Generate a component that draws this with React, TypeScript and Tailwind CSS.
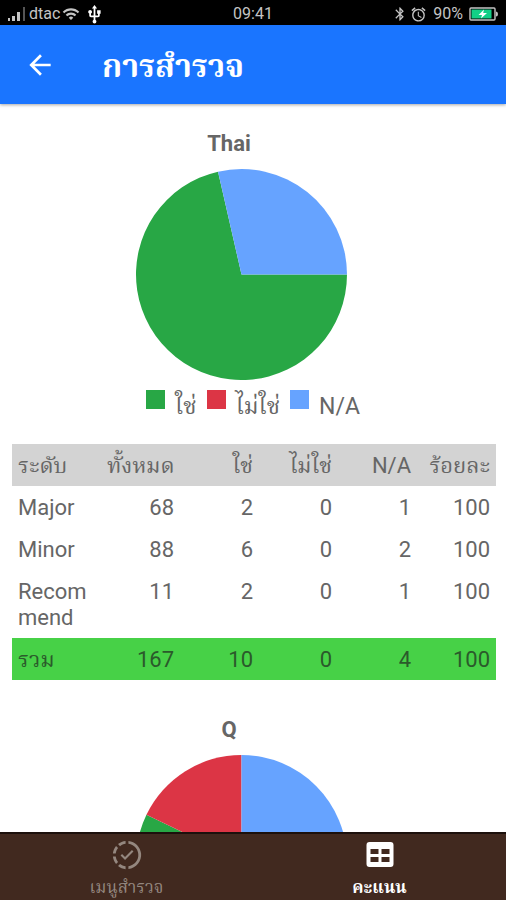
import { MdAccessAlarm, MdArrowBack, MdBluetooth, MdUsb, MdWifi } from "react-icons/md";

const GREEN = "#28a745";
const RED = "#dc3545";
const BLUE = "#66a3ff";

const columns = ["ระดับ", "ทั้งหมด", "ใช่", "ไม่ใช่", "N/A", "ร้อยละ"];

const rows = [
  ["Major", 68, 2, 0, 1, 100],
  ["Minor", 88, 6, 0, 2, 100],
  ["Recommend", 11, 2, 0, 1, 100],
];

const total = ["รวม", 167, 10, 0, 4, 100];

const legend = [
  { label: "ใช่", color: GREEN },
  { label: "ไม่ใช่", color: RED },
  { label: "N/A", color: BLUE },
];

type Slice = { value: number; color: string };

// slices run clockwise, starting at three o'clock
const PieChart = ({ slices }: { slices: Slice[] }) => {
  const sum = slices.reduce((acc, s) => acc + s.value, 0);
  let angle = 0;

  return (
    <svg viewBox="-100 -100 200 200" className="size-[211px]">
      {slices
        .filter((s) => s.value > 0)
        .map((s) => {
          const start = angle;
          const sweep = (s.value / sum) * Math.PI * 2;
          angle += sweep;
          const x1 = Math.cos(start) * 100;
          const y1 = Math.sin(start) * 100;
          const x2 = Math.cos(angle) * 100;
          const y2 = Math.sin(angle) * 100;
          return (
            <path
              key={s.color}
              fill={s.color}
              d={`M0 0L${x1} ${y1}A100 100 0 ${sweep > Math.PI ? 1 : 0} 1 ${x2} ${y2}Z`}
            />
          );
        })}
    </svg>
  );
};

const Chart = ({ title, slices }: { title: string; slices: Slice[] }) => {
  return (
    <>
      <h2 className="pr-[50px] text-center text-[22px] leading-[26px] font-bold text-[#666]">
        {title}
      </h2>
      <div className="mt-3 flex justify-center pr-[26px]">
        <PieChart slices={slices} />
      </div>
    </>
  );
};

const Legend = () => {
  return (
    <ul className="mt-[10px] flex justify-center gap-x-[10px] pr-[2px] text-[23px] leading-[26px]">
      {legend.map((item) => (
        <li key={item.label} className="flex items-start gap-x-[10px]">
          <span
            className="size-[19px]"
            style={{ backgroundColor: item.color }}
          />
          <span className="pt-1">{item.label}</span>
        </li>
      ))}
    </ul>
  );
};

const ScoreTable = () => {
  return (
    <table className="mt-6 w-full table-fixed text-right">
      <thead className="bg-[#d3d3d3]">
        <tr>
          {columns.map((col) => (
            <th
              key={col}
              scope="col"
              className="px-[6px] pt-[9px] pb-[7px] font-normal whitespace-nowrap first:w-[89px] first:text-left"
            >
              {col}
            </th>
          ))}
        </tr>
      </thead>
      <tbody>
        {rows.map((row) => (
          <tr key={row[0]}>
            {row.map((cell, i) => (
              <td
                key={i}
                className="px-[6px] pt-[9px] pb-[7px] align-top break-all first:text-left"
              >
                {cell}
              </td>
            ))}
          </tr>
        ))}
      </tbody>
      <tfoot className="bg-[#47d147] text-[#2b5a2b]">
        <tr>
          {total.map((cell, i) => (
            <td key={i} className="px-[6px] pt-[9px] pb-[7px] first:text-left">
              {cell}
            </td>
          ))}
        </tr>
      </tfoot>
    </table>
  );
};

const StatusBar = () => {
  return (
    <div className="grid h-[25px] shrink-0 grid-cols-[1fr_auto_1fr] items-center bg-black px-[7px] pt-[2px] text-base text-[#c4c4c4]">
      <div className="flex items-center gap-x-[2px]">
        <svg viewBox="0 0 20 14" className="h-[14px] w-5" fill="currentColor">
          <rect x="1" y="11" width="2" height="3" />
          <rect x="5" y="9" width="3" height="5" />
          <rect x="10" y="5" width="3" height="9" />
          <rect x="16" y="0" width="2" height="14" fill="#555" />
        </svg>
        <span>dtac</span>
        <MdWifi className="size-[18px]" />
        <MdUsb className="ml-[2px] size-[21px] text-white" />
      </div>
      <span>09:41</span>
      <div className="flex items-center justify-end gap-x-[2px]">
        <MdBluetooth className="size-4" />
        <MdAccessAlarm className="size-[17px]" />
        <span className="mx-1">90%</span>
        <svg viewBox="0 0 30 14" className="h-[14px] w-[30px]">
          <rect
            x="1"
            y="1"
            width="25"
            height="12"
            rx="1"
            fill="none"
            stroke="#c4c4c4"
            strokeWidth="1.4"
          />
          <rect x="2.5" y="2.5" width="20" height="9" fill="#12cf86" />
          <path d="M27 4.5q2 0 2 2.5t-2 2.5z" fill="#c4c4c4" />
          <path d="M15 2.5L9.500 8h3.500l-1 3.500L18 6h-3.800z" fill="#fff" />
        </svg>
      </div>
    </div>
  );
};

const App = () => {
  return (
    <div className="flex h-screen flex-col overflow-hidden bg-white font-['Roboto','Noto_Serif_Thai','Noto_Sans',sans-serif] text-[#666]">
      <StatusBar />
      <header className="relative z-10 flex h-[79px] shrink-0 items-center bg-[#1a75ff] px-6 text-white shadow-[0_1px_3px_rgba(0,0,0,0.35)]">
        <button type="button" aria-label="Back">
          <MdArrowBack className="size-8" />
        </button>
        <h1 className="ml-[46px] pt-[2px] text-[32px] leading-10 font-bold">
          การสำรวจ
        </h1>
      </header>

      <main className="min-h-0 flex-1 overflow-y-auto pr-[10px] pl-3 text-[22px] leading-[26px] [scrollbar-width:none]">
        <section className="pt-[27px]">
          <Chart
            title="Thai"
            slices={[
              { value: 10, color: GREEN },
              { value: 0, color: RED },
              { value: 4, color: BLUE },
            ]}
          />
          <Legend />
          <ScoreTable />
        </section>
        <section className="py-[37px]">
          <Chart
            title="Q"
            slices={[
              { value: 16, color: GREEN },
              { value: 5, color: RED },
              { value: 7, color: BLUE },
            ]}
          />
        </section>
      </main>

      <nav className="grid h-[68px] shrink-0 grid-cols-2 border-t-2 border-[#1c100c] bg-[#41291f] text-[17px] leading-5">
        <button
          type="button"
          className="flex flex-col items-center gap-y-[5px] pt-1 text-[#94877f]"
        >
          <svg viewBox="0 0 24 24" className="size-[34px]" fill="currentColor">
            <path d="M13 2.03v2.020C17.390 4.590 20.500 8.580 19.960 12.970C19.500 16.610 16.640 19.500 13 19.930v2C18.500 21.380 22.500 16.500 21.950 11C21.500 6.250 17.730 2.500 13 2.030M11 2.060C9.050 2.250 7.190 3 5.670 4.260L7.100 5.740C8.220 4.840 9.570 4.260 11 4.060V2.060M4.260 5.670C3 7.190 2.250 9.040 2.050 11h2C4.240 9.580 4.800 8.230 5.690 7.100L4.260 5.670M15.500 8.500L10.620 13.380L8.500 11.260L7.440 12.320L10.620 15.500L16.560 9.560L15.500 8.500M2.060 13C2.260 14.960 3.030 16.810 4.270 18.330L5.690 16.900C4.810 15.770 4.240 14.420 4.060 13H2.060M7.100 18.370L5.670 19.740C7.180 21 9.040 21.790 11 22V20C9.580 19.820 8.230 19.250 7.100 18.370Z" />
          </svg>
          เมนูสำรวจ
        </button>
        <button
          type="button"
          aria-current="page"
          className="flex flex-col items-center gap-y-[5px] pt-1 font-bold text-white"
        >
          <svg viewBox="0 0 34 34" className="size-[34px]" fill="currentColor">
            <path
              fillRule="evenodd"
              d="M6.500 4h21a3 3 0 0 1 3 3v19a3 3 0 0 1-3 3h-21a3 3 0 0 1-3-3V7a3 3 0 0 1 3-3zM7.500 11v5h8v-5zM18.500 11v5h8v-5zM7.500 19v5h8v-5zM18.500 19v5h8v-5z"
            />
          </svg>
          คะแนน
        </button>
      </nav>
    </div>
  );
};

export default App;
